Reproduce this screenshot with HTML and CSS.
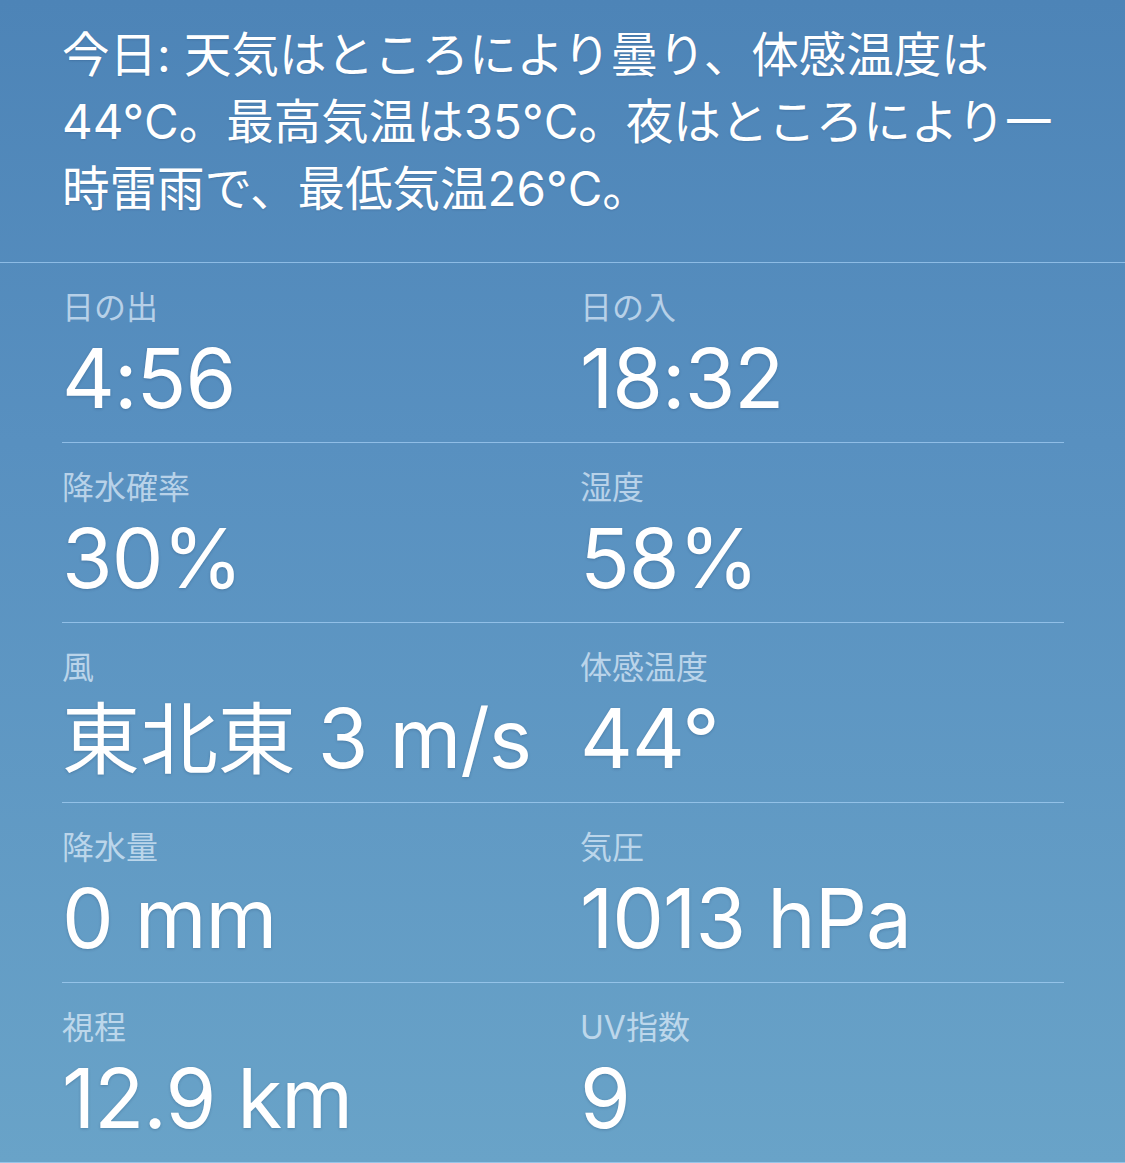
FILE: index.html
```html
<!DOCTYPE html>
<html lang="ja">
<head>
<meta charset="utf-8">
<title>天気の詳細</title>
<link rel="stylesheet" href="styles.css">
</head>
<body>
<main class="weather">
  <p class="summary">今日: 天気はところにより曇り、体感温度は44°C。最高気温は35°C。夜はところにより一時雷雨で、最低気温26°C。</p>
  <section class="details">
    <div class="cell"><div class="label">日の出</div><div class="value">4:56</div></div>
    <div class="cell"><div class="label">日の入</div><div class="value">18:32</div></div>
    <div class="cell"><div class="label">降水確率</div><div class="value">30%</div></div>
    <div class="cell"><div class="label">湿度</div><div class="value">58%</div></div>
    <div class="cell"><div class="label">風</div><div class="value"><span class="cjk">東北東</span> 3 m/s</div></div>
    <div class="cell"><div class="label">体感温度</div><div class="value">44°</div></div>
    <div class="cell"><div class="label">降水量</div><div class="value">0 mm</div></div>
    <div class="cell"><div class="label">気圧</div><div class="value">1013 hPa</div></div>
    <div class="cell last"><div class="label">視程</div><div class="value">12.9 km</div></div>
    <div class="cell last"><div class="label">UV指数</div><div class="value">9</div></div>
  </section>
  <div class="bottom-rule"></div>
</main>
</body>
</html>
```
FILE: styles.css
```css
html, body {
  margin: 0;
  padding: 0;
}

body {
  width: 1125px;
  height: 1163px;
  overflow: hidden;
  background: linear-gradient(to bottom, #4d84b7 0%, #5890c0 38%, #69a3c8 100%);
  font-family: Inter, "Noto Sans CJK JP", sans-serif;
  color: #ffffff;
}

.weather {
  display: flex;
  flex-direction: column;
  height: 1163px;
}

.summary {
  margin: 0;
  padding: 21px 61px 40px 62px;
  font-size: 47.5px;
  line-height: 67px;
  border-bottom: 1px solid rgba(180, 220, 255, 0.6);
  text-shadow: 0 1px 2px rgba(0, 30, 70, 0.15);
}

.details {
  display: grid;
  grid-template-columns: 518px 484px;
  padding: 0 61px 0 62px;
}

.cell {
  display: flex;
  flex-direction: column;
  gap: 6px;
  height: 179px;
  box-sizing: content-box;
  padding: 0;
  border-bottom: 1px solid rgba(180, 220, 255, 0.6);
}

.cell.last {
  border-bottom: none;
}

.label {
  margin-top: 25px;
  font-size: 32px;
  line-height: 40px;
  color: rgba(235, 245, 255, 0.66);
}

.value {
  height: 90px;
  font-size: 82px;
  line-height: 90px;
  letter-spacing: -1px;
  white-space: nowrap;
  text-shadow: 0 1px 3px rgba(0, 30, 70, 0.22);
}

.cjk {
  font-size: 0.95em;
  line-height: 1;
  letter-spacing: 0;
}

.bottom-rule {
  margin-top: auto;
  height: 2px;
  background: rgba(180, 220, 255, 0.6);
}
```
